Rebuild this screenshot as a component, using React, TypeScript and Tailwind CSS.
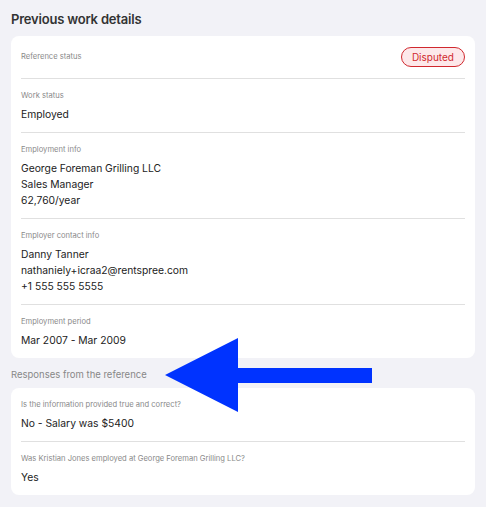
import React from "react";

function Row({ label, children, last, right }: { label: string; children?: React.ReactNode; last?: boolean; right?: React.ReactNode }) {
  return (
    <div className={`${last ? "" : "border-b border-[#e0e0e0]"}`}>
      {right ? (
        <div className="flex items-center justify-between h-[42px]">
          <span className="text-[7.6px] text-[#8a8a8a]">{label}</span>
          {right}
        </div>
      ) : (
        <div className="pt-[11px] pb-[10px]">
          <div className="text-[7.6px] leading-[12px] text-[#8a8a8a]">{label}</div>
          <div className="mt-[4px] text-[10.3px] leading-[16px] text-[#222]">{children}</div>
        </div>
      )}
    </div>
  );
}

export default function App() {
  return (
    <div
      className="relative w-[486px] h-[507px] bg-[#f2f2f7] px-[11px] pt-[9px]"
      style={{ fontFamily: "Inter, 'Noto Sans', sans-serif" }}
    >
      <h1 className="text-[13px] leading-[20px] font-semibold tracking-[-0.2px] text-[#333]">Previous work details</h1>
      <div className="mt-[7px] bg-white rounded-[8px] px-[10px]">
        <Row
          label="Reference status"
          right={
            <span className="rounded-full border border-[#d0282e] bg-[#fde8ea] text-[#d0282e] text-[10px] leading-[18px] px-[10px]">
              Disputed
            </span>
          }
        />
        <Row label="Work status">Employed</Row>
        <Row label="Employment info">
          George Foreman Grilling LLC
          <br />
          Sales Manager
          <br />
          62,760/year
        </Row>
        <Row label="Employer contact info">
          Danny Tanner
          <br />
          nathaniely+icraa2@rentspree.com
          <br />
          +1 555 555 5555
        </Row>
        <Row label="Employment period" last>
          Mar 2007 - Mar 2009
        </Row>
      </div>
      <div className="mt-[10px] text-[9.5px] leading-[14px] text-[#888]">Responses from the reference</div>
      <div className="mt-[6px] bg-white rounded-[8px] px-[10px]">
        <Row label="Is the information provided true and correct?">No - Salary was $5400</Row>
        <Row label="Was Kristian Jones employed at George Foreman Grilling LLC?" last>
          Yes
        </Row>
      </div>
      <svg className="absolute left-0 top-0 pointer-events-none" width="486" height="507">
        <polygon points="165,375 238,338 238,368 372,368 372,383 238,383 238,412" fill="#0033ff" />
      </svg>
    </div>
  );
}
